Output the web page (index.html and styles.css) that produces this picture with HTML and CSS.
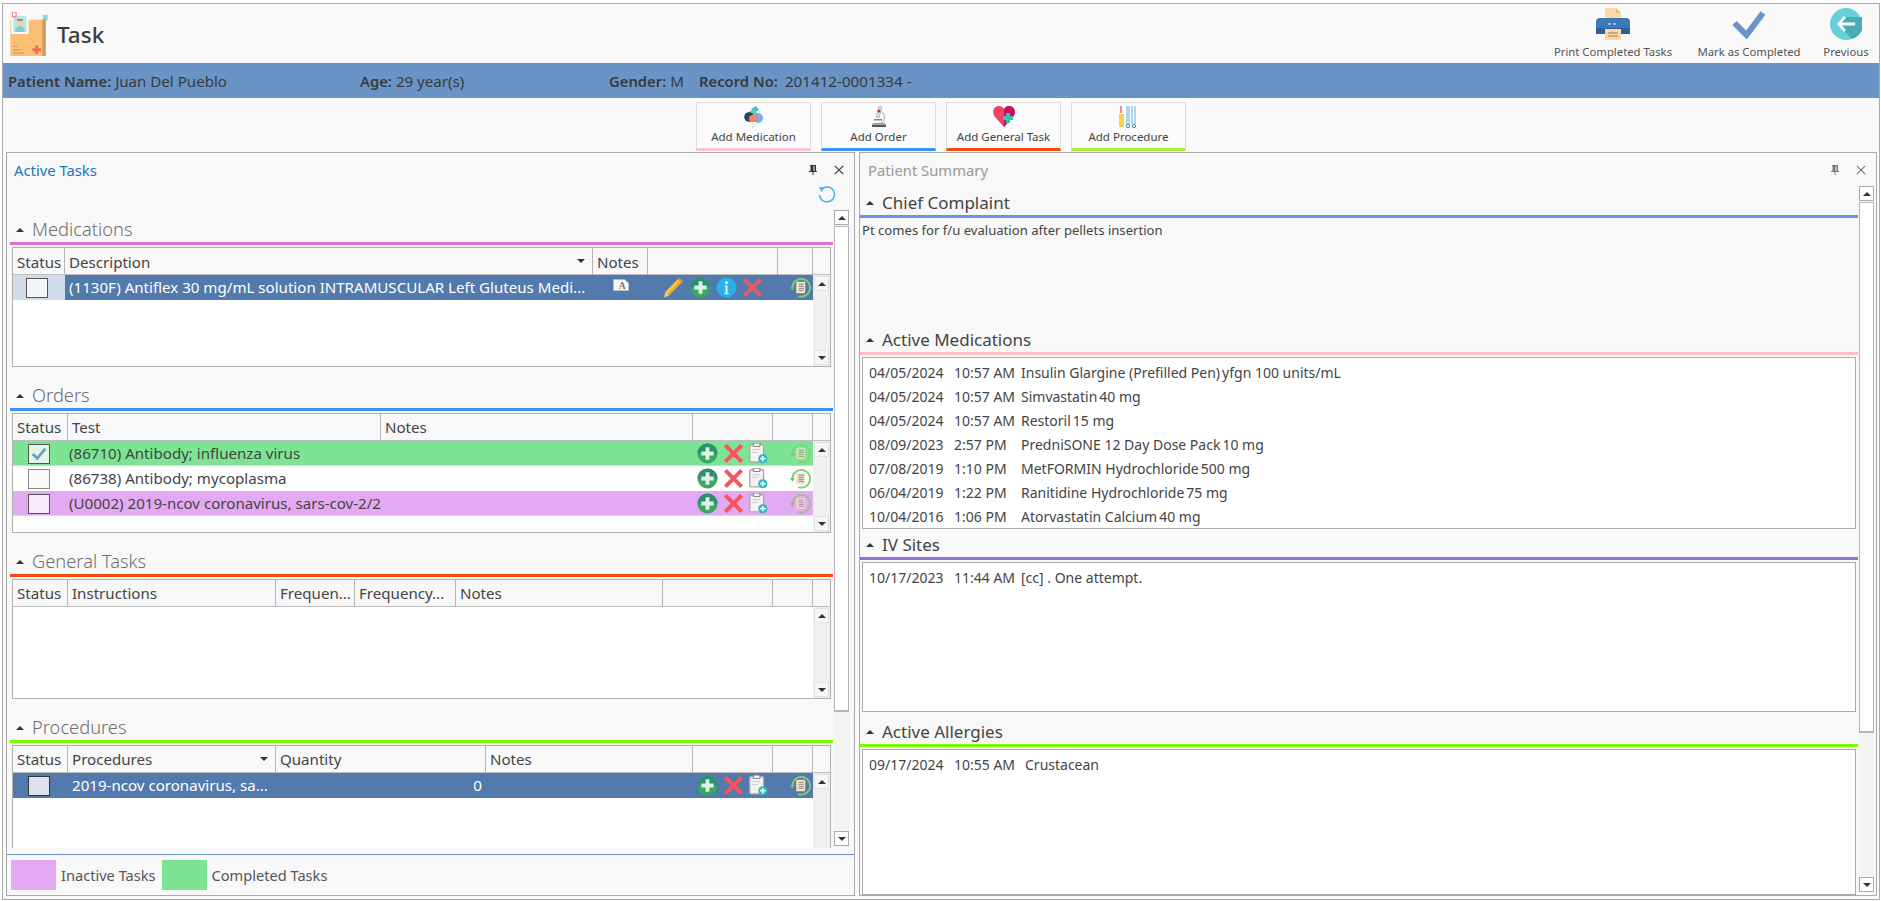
FILE: index.html
```html
<!DOCTYPE html>
<html lang="en">
<head>
<meta charset="utf-8">
<title>Task</title>
<link rel="stylesheet" href="styles.css">
</head>
<body>
<svg class="defs" aria-hidden="true">
  <symbol id="i-plus" viewBox="0 0 22 22"><circle cx="11" cy="11" r="10.5" fill="#3aa85f"/><path d="M.5 11a10.5 10.5 0 0 1 21 0z" fill="#2b8f70"/><path d="M9 4.500h4V9h4.500v4H13v4.500H9V13H4.500V9H9z" fill="#dff3e6"/></symbol>
  <symbol id="i-x" viewBox="0 0 22 22"><path d="M2.500 2.500l17 17M19.500 2.500l-17 17" stroke="#f4565f" stroke-width="4.200" fill="none"/></symbol>
  <symbol id="i-info" viewBox="0 0 22 22"><circle cx="11" cy="11" r="10.500" fill="#2bb0ee"/><path d="M9 9h3v8h1.500v1.200h-5V17H10v-6.800H9z" fill="#e8f7ff"/><circle cx="11" cy="5.800" r="1.700" fill="#e8f7ff"/></symbol>
  <symbol id="i-pencil" viewBox="0 0 22 22"><path d="M16.500 1l4 3.500L6 19.500 2 15.500z" fill="#f2a81d"/><path d="M16.500 1l2 1.800L4 17.500 2 15.500z" fill="#fbc93b"/><path d="M2 15.500l4 4-5.500 2z" fill="#eec39a"/><path d="M16.500 1l4 3.500-1.500 1.500-4-3.500z" fill="#f08a24"/></symbol>
  <symbol id="i-clip" viewBox="0 0 20 22"><rect x=".8" y="1.800" width="14.500" height="18" rx="1" fill="#f3f3f3" stroke="#a9a9a9" stroke-width="1.400"/><path d="M4.500 0h7v3.500h-7z" fill="#fff" stroke="#777"/><path d="M3.500 7h8M3.500 10h6" stroke="#ccc" stroke-width="1.200"/><circle cx="14.500" cy="16.500" r="4.800" fill="#2db5c4"/><path d="M13.600 13.500h1.800v2.100h2.100v1.800h-2.100v2.100h-1.800v-2.100h-2.100v-1.800h2.100z" fill="#e6fafa"/></symbol>
  <symbol id="i-restore" viewBox="0 0 22 22"><path d="M2.500 11A9.300 9.300 0 1 1 8.500 20" fill="none" stroke="#7fcf6f" stroke-width="1.900"/><path d="M0 10.500h5l-2.500 3.800z" fill="#74bd68"/><rect x="6.500" y="5.500" width="9" height="11.500" fill="#f7dcb4"/><rect x="7.500" y="5" width="8.500" height="10.500" fill="#efe4cf"/><path d="M9 7.500h5.500M9 9.700h5.500M9 11.900h5.500M9 14h5.500" stroke="#8b8478" stroke-width="1"/></symbol>
  <symbol id="i-note" viewBox="0 0 16 12"><path d="M.5.500h11l4 3.500v7.500H.5z" fill="#f7f7f7" stroke="#b9b9b9"/><text x="5.500" y="10" font-family="Liberation Serif, serif" font-size="10" font-weight="700" fill="#777">A</text></symbol>
  <symbol id="i-check" viewBox="0 0 20 18"><path d="M3 9l5 5 9-11" fill="none" stroke="#6aa0b8" stroke-width="3"/></symbol>
  <symbol id="i-refresh" viewBox="0 0 18 18"><path d="M4 2.800A7.500 7.500 0 1 1 1.500 9" fill="none" stroke="#3fb6ee" stroke-width="1.500"/><path d="M1 1l5.500.5-3 4.500z" fill="#3fb6ee"/></symbol>
  <symbol id="i-pin" viewBox="0 0 10 10"><path d="M2 0h6v6H6.500v-5H2zM1 6h8v1H5.500v3h-1V7H1zM2.500 1h3v5h-3z" fill="currentColor"/></symbol>
  <symbol id="i-close" viewBox="0 0 10 10"><path d="M.8.800l8.400 8.400M9.200.800L.8 9.200" stroke="currentColor" stroke-width="1.100" fill="none"/></symbol>
  <symbol id="i-logo" viewBox="0 0 40 46"><path d="M0 8h34v38H0z" fill="#fbbf76"/><path d="M34 3h5v6h-5z" fill="#8ed8d4"/><path d="M34 8h3v38h-3z" fill="#b98a52" opacity=".85"/><path d="M33 8h1v38h-1z" fill="#e8a55c"/><rect x="1" y="2" width="18" height="21" fill="#fff"/><rect x="3" y="4" width="14" height="17" fill="#b6e8e8"/><path d="M5 21c0-5 3-6 5-6s5 1 5 6z" fill="#7fcfca"/><circle cx="10" cy="11" r="3" fill="#f6cf9c"/><path d="M7 9h6v-1.500H7z" fill="#8a6a3c"/><rect x="2" y="0" width="4" height="5" fill="#fff" stroke="#f06a5a"/><path d="M23 38h3v-3h3v3h3v3h-3v3h-3v-3h-3z" fill="#ef6b4a"/><path d="M3 36h5M3 39.500h8M3 43h12" stroke="#c69a63" stroke-width="1"/></symbol>
  <symbol id="i-print" viewBox="0 0 34 32"><path d="M9 0h11l5 5v10H9z" fill="#fbd7a9"/><path d="M20 0l5 5h-5z" fill="#eabb85"/><path d="M0 14a4 4 0 0 1 4-4h26a4 4 0 0 1 4 4v12H0z" fill="#3d77b6"/><path d="M0 20h34v6H0z" fill="#2c5f9b"/><path d="M12 16h3M17 16h3" stroke="#bcd4ee" stroke-width="1.500"/><path d="M9 21h16v11H9z" fill="#fbd7a9"/><path d="M12 25h10M12 28h10" stroke="#9a7a54" stroke-width="1"/></symbol>
  <symbol id="i-done" viewBox="0 0 34 30"><path d="M2.500 13l12 12L31 3" fill="none" stroke="#6b93c7" stroke-width="6"/></symbol>
  <symbol id="i-prev" viewBox="0 0 32 32"><circle cx="16" cy="16" r="16" fill="#66d0da"/><path d="M16 9h16A16 16 0 0 1 22 31L8 17z" fill="#4aaab8"/><path d="M14 8l-7 8 7 8 2-2-4-4.500h13v-3H12l4-4.500z" fill="#f4fcfd"/></symbol>
  <symbol id="i-pills" viewBox="0 0 22 22"><path d="M8 3l5-3 3 4-5 3z" fill="#4cc1b8"/><path d="M4 7l7-4 3 5-7 4z" fill="#63c8bd"/><circle cx="6" cy="11" r="4.800" fill="#27435f"/><circle cx="15" cy="12" r="5" fill="#74b4ea"/><rect x="6" y="9" width="9" height="7" rx="3.500" fill="#f08566"/><path d="M10 17v5M13 18v2" stroke="#bbb" stroke-dasharray="1.500 1.500"/></symbol>
  <symbol id="i-scope" viewBox="0 0 20 22"><path d="M3 21h14v-2.500H3z" fill="#555"/><path d="M4 17h12v1H4z" fill="#999"/><path d="M10 0l3 1-3 11-3-1z" fill="#ddd" stroke="#999" stroke-width=".600"/><circle cx="10" cy="5" r="1.500" fill="#c0392b"/><path d="M13 6a6.500 6.500 0 0 1-1 11" fill="none" stroke="#bbb" stroke-width="1.200"/><path d="M5 13h8v1.500H5z" fill="#888"/></symbol>
  <symbol id="i-heart" viewBox="0 0 22 22"><path d="M11 21L2 11C-2 6 1 0 6 0c2.500 0 4 1.500 5 3 1-1.500 2.500-3 5-3 5 0 8 6 4 11z" fill="#f2426a"/><path d="M11 3c1-1.500 2.500-3 5-3 5 0 8 6 4 11l-9 10z" fill="#c6105f"/><path d="M13 7h4v3h3v4h-3v3h-4v-3h-3v-4h3z" fill="#35c4b4"/></symbol>
  <symbol id="i-tools" viewBox="0 0 20 22"><rect x="0" y="8" width="5" height="13" fill="#f6cf55"/><path d="M2 0v7" stroke="#e86a6a" stroke-width="1.500"/><path d="M8 0v18M10 0v18M13 0v18M16 0v18" stroke="#6fb7e8" stroke-width="1.100"/><circle cx="9" cy="20" r="1.700" fill="none" stroke="#3d86c6"/><circle cx="15" cy="20" r="1.700" fill="none" stroke="#3d86c6"/></symbol>
</svg>

<div class="window">
  <header class="top">
    <div class="brand">
      <svg class="logo"><use href="#i-logo"/></svg>
      <h1 class="title">Task</h1>
    </div>
    <nav class="actions">
      <div class="action action-print"><svg class="ai ai-print"><use href="#i-print"/></svg><span>Print Completed Tasks</span></div>
      <div class="action action-mark"><svg class="ai ai-done"><use href="#i-done"/></svg><span>Mark as Completed</span></div>
      <div class="action action-prev"><svg class="ai ai-prev"><use href="#i-prev"/></svg><span>Previous</span></div>
    </nav>
  </header>

  <div class="patient">
    <div class="pf pf-name"><b>Patient Name:</b> Juan Del Pueblo</div>
    <div class="pf pf-age"><b>Age:</b> 29 year(s)</div>
    <div class="pf pf-gender"><b>Gender:</b> M</div>
    <div class="pf"><b>Record No:</b><span class="rec">201412-0001334 -</span></div>
  </div>

  <div class="toolbar">
    <button class="tb tb-pink"><svg class="tbi"><use href="#i-pills"/></svg><span>Add Medication</span></button>
    <button class="tb tb-blue"><svg class="tbi"><use href="#i-scope"/></svg><span>Add Order</span></button>
    <button class="tb tb-red"><svg class="tbi"><use href="#i-heart"/></svg><span>Add General Task</span></button>
    <button class="tb tb-green"><svg class="tbi"><use href="#i-tools"/></svg><span>Add Procedure</span></button>
  </div>

  <main class="panels">
    <section class="panel panel-left">
      <div class="phead">
        <span class="ptitle ptitle-active">Active Tasks</span>
        <div class="ptools"><svg class="pt"><use href="#i-pin"/></svg><svg class="pt"><use href="#i-close"/></svg></div>
      </div>
      <div class="refresh-row"><svg class="refresh"><use href="#i-refresh"/></svg></div>
      <div class="pbody">
        <div class="tasks">
          <div class="sec">
            <div class="heading light"><i class="caret"></i>Medications</div>
            <div class="rule r-meds"></div>
            <div class="grid">
              <div class="ghead h-meds"><div class="c">Status</div><div class="c sort">Description<i class="dn"></i></div><div class="c">Notes</div><div class="c"></div><div class="c"></div><div class="c last"></div></div>
              <div class="gbody">
                <div class="rows">
                  <div class="row t-meds sel">
                    <div class="st"><i class="box"></i></div>
                    <div class="tx">(1130F) Antiflex 30 mg/mL solution INTRAMUSCULAR Left Gluteus Medi...</div>
                    <div class="notec"><svg class="ic-note"><use href="#i-note"/></svg></div>
                    <div class="icons icons-m"><svg class="ic ic-pen"><use href="#i-pencil"/></svg><svg class="ic"><use href="#i-plus"/></svg><svg class="ic"><use href="#i-info"/></svg><svg class="ic"><use href="#i-x"/></svg></div>
                    <div class="rest rest-m"><svg class="ic"><use href="#i-restore"/></svg></div>
                  </div>
                </div>
                <div class="sb"><b class="btn"><i class="up"></i></b><b class="btn"><i class="dn"></i></b></div>
              </div>
            </div>
          </div>

          <div class="sec">
            <div class="heading light"><i class="caret"></i>Orders</div>
            <div class="rule r-orders"></div>
            <div class="grid">
              <div class="ghead h-orders"><div class="c">Status</div><div class="c">Test</div><div class="c">Notes</div><div class="c"></div><div class="c"></div><div class="c last"></div></div>
              <div class="gbody">
                <div class="rows">
                  <div class="row t-orders done">
                    <div class="st"><i class="box"><svg class="tick"><use href="#i-check"/></svg></i></div>
                    <div class="tx tx-o">(86710) Antibody; influenza virus</div><div></div>
                    <div class="icons"><svg class="ic"><use href="#i-plus"/></svg><svg class="ic"><use href="#i-x"/></svg><svg class="ic ic-c"><use href="#i-clip"/></svg></div>
                    <div class="rest faded"><svg class="ic"><use href="#i-restore"/></svg></div>
                  </div>
                  <div class="row t-orders">
                    <div class="st"><i class="box"></i></div>
                    <div class="tx tx-o">(86738) Antibody; mycoplasma</div><div></div>
                    <div class="icons"><svg class="ic"><use href="#i-plus"/></svg><svg class="ic"><use href="#i-x"/></svg><svg class="ic ic-c"><use href="#i-clip"/></svg></div>
                    <div class="rest"><svg class="ic"><use href="#i-restore"/></svg></div>
                  </div>
                  <div class="row t-orders inactive">
                    <div class="st"><i class="box"></i></div>
                    <div class="tx tx-o">(U0002) 2019-ncov coronavirus, sars-cov-2/2019-ncov</div><div></div>
                    <div class="icons"><svg class="ic"><use href="#i-plus"/></svg><svg class="ic"><use href="#i-x"/></svg><svg class="ic ic-c"><use href="#i-clip"/></svg></div>
                    <div class="rest faded"><svg class="ic"><use href="#i-restore"/></svg></div>
                  </div>
                </div>
                <div class="sb"><b class="btn"><i class="up"></i></b><b class="btn"><i class="dn"></i></b></div>
              </div>
            </div>
          </div>

          <div class="sec">
            <div class="heading light"><i class="caret"></i>General Tasks</div>
            <div class="rule r-general"></div>
            <div class="grid">
              <div class="ghead h-general"><div class="c">Status</div><div class="c">Instructions</div><div class="c">Frequen...</div><div class="c">Frequency...</div><div class="c">Notes</div><div class="c"></div><div class="c"></div><div class="c last"></div></div>
              <div class="gbody">
                <div class="rows"></div>
                <div class="sb"><b class="btn"><i class="up"></i></b><b class="btn"><i class="dn"></i></b></div>
              </div>
            </div>
          </div>

          <div class="sec">
            <div class="heading light"><i class="caret"></i>Procedures</div>
            <div class="rule r-proc"></div>
            <div class="grid">
              <div class="ghead h-proc"><div class="c">Status</div><div class="c sort">Procedures<i class="dn"></i></div><div class="c">Quantity</div><div class="c">Notes</div><div class="c"></div><div class="c"></div><div class="c last"></div></div>
              <div class="gbody">
                <div class="rows">
                  <div class="row t-proc sel sel-full">
                    <div class="st"><i class="box"></i></div>
                    <div class="tx tx-p">2019-ncov coronavirus, sa...</div>
                    <div class="qty">0</div><div></div>
                    <div class="icons"><svg class="ic"><use href="#i-plus"/></svg><svg class="ic"><use href="#i-x"/></svg><svg class="ic ic-c"><use href="#i-clip"/></svg></div>
                    <div class="rest"><svg class="ic"><use href="#i-restore"/></svg></div>
                  </div>
                </div>
                <div class="sb"><b class="btn"><i class="up"></i></b><b class="btn"><i class="dn"></i></b></div>
              </div>
            </div>
          </div>
        </div>
        <div class="osb osb-left">
          <b class="obtn"><i class="up"></i></b>
          <div class="otrack"><div class="othumb othumb-left"></div></div>
          <b class="obtn"><i class="dn"></i></b>
        </div>
      </div>
      <footer class="legend">
        <i class="sw sw-in"></i><span class="lg">Inactive Tasks</span>
        <i class="sw sw-co"></i><span class="lg">Completed Tasks</span>
      </footer>
    </section>

    <section class="panel panel-right">
      <div class="phead">
        <span class="ptitle">Patient Summary</span>
        <div class="ptools gray"><svg class="pt"><use href="#i-pin"/></svg><svg class="pt"><use href="#i-close"/></svg></div>
      </div>
      <div class="sumbody">
        <div class="summary">
          <div class="heading h-chief"><i class="caret"></i>Chief Complaint</div>
          <div class="rule r-chief"></div>
          <div class="chief">Pt comes for f/u evaluation after pellets insertion</div>

          <div class="heading h-med"><i class="caret"></i>Active Medications</div>
          <div class="rule r-amed"></div>
          <div class="list list-med">
            <div class="li"><span class="d">04/05/2024</span><span class="t">10:57 AM</span><span>Insulin Glargine (Prefilled Pen)</span><span class="dose">yfgn 100 units/mL</span></div>
            <div class="li"><span class="d">04/05/2024</span><span class="t">10:57 AM</span><span>Simvastatin</span><span class="dose">40 mg</span></div>
            <div class="li"><span class="d">04/05/2024</span><span class="t">10:57 AM</span><span>Restoril</span><span class="dose">15 mg</span></div>
            <div class="li"><span class="d">08/09/2023</span><span class="t">2:57 PM</span><span>PredniSONE 12 Day Dose Pack</span><span class="dose">10 mg</span></div>
            <div class="li"><span class="d">07/08/2019</span><span class="t">1:10 PM</span><span>MetFORMIN Hydrochloride</span><span class="dose">500 mg</span></div>
            <div class="li"><span class="d">06/04/2019</span><span class="t">1:22 PM</span><span>Ranitidine Hydrochloride</span><span class="dose">75 mg</span></div>
            <div class="li"><span class="d">10/04/2016</span><span class="t">1:06 PM</span><span>Atorvastatin Calcium</span><span class="dose">40 mg</span></div>
          </div>

          <div class="heading h-iv"><i class="caret"></i>IV Sites</div>
          <div class="rule r-iv"></div>
          <div class="list list-iv">
            <div class="li"><span class="d">10/17/2023</span><span class="t">11:44 AM</span><span>[cc] . One attempt.</span></div>
          </div>

          <div class="heading h-med"><i class="caret"></i>Active Allergies</div>
          <div class="rule r-all"></div>
          <div class="list list-all">
            <div class="li"><span class="d">09/17/2024</span><span class="t t-all">10:55 AM</span><span>Crustacean</span></div>
          </div>
        </div>
        <div class="osb osb-right">
          <b class="obtn"><i class="up"></i></b>
          <div class="otrack"><div class="othumb othumb-right"></div></div>
          <b class="obtn"><i class="dn"></i></b>
        </div>
      </div>
    </section>
  </main>
</div>
</body>
</html>
```
FILE: styles.css
```css
* { box-sizing: border-box; }
html, body { margin: 0; height: 100%; }
body {
  padding: 3px 1px 1px 2px;
  background: #fff;
  font-family: "Noto Sans", "Open Sans", sans-serif;
  font-size: 15.1px;
  color: #444;
  overflow: hidden;
}
.defs { position: absolute; width: 0; height: 0; }
i { font-style: normal; }

.window {
  height: 897px;
  border: 1px solid #aaa;
  background: #fafafa;
  display: flex;
  flex-direction: column;
}

/* top */
.top { height: 59px; display: flex; justify-content: space-between; flex: none; background: #f9f9f9; }
.brand { display: flex; align-items: flex-start; padding: 8px 0 0 7px; }
.logo { width: 39px; height: 44px; }
.title { margin: 8px 0 0 8px; font-size: 22.5px; line-height: 30px; font-weight: 500; color: #3c3c3c; }
.actions { display: flex; }
.action { display: flex; flex-direction: column; align-items: center; font-size: 11.3px; color: #555; padding-top: 4px; }
.action span { line-height: 16px; margin-top: 4px; white-space: nowrap; }
.action-print { width: 120px; margin-right: 24px; }
.action-mark { width: 104px; margin-right: 22px; }
.action-prev { width: 46px; margin-right: 10px; }
.ai { display: block; }
.ai-print { width: 34px; height: 32px; }
.ai-done { width: 34px; height: 30px; margin-top: 2px; }
.ai-prev { width: 32px; height: 32px; }

/* patient */
.patient { height: 35px; flex: none; background: #6a93c6; display: flex; align-items: center; padding-left: 5px; font-size: 15.1px; color: #3a3a3a; }
.pf b { font-weight: 600; font-size: 14.8px; }
.pf-name { width: 352px; }
.pf-age { width: 249px; }
.pf-gender { width: 90px; }
.rec { margin-left: 7px; font-size: 15.2px; }

/* toolbar */
.toolbar { height: 54px; flex: none; display: flex; justify-content: center; gap: 10px; padding: 4px 0 0 0; }
.tb {
  width: 115px; height: 49px; padding: 3px 0 0;
  background: #fbfbfb; border: 1px solid #dcdcdc; border-bottom-width: 3px;
  display: flex; flex-direction: column; align-items: center;
  font: inherit; font-size: 11.5px; color: #444; line-height: 15px;
}
.tbi { width: 22px; height: 22px; margin-bottom: 1px; flex: none; }
.tb-pink { border-bottom-color: #f7c3d0; }
.tb-blue { border-bottom-color: #3b92f5; }
.tb-red { border-bottom-color: #f44a0c; }
.tb-green { border-bottom-color: #a8ee3a; }

/* panels */
.panels { flex: 1; min-height: 0; display: flex; gap: 4px; padding: 0 2px 3px 3px; }
.panel { border: 1px solid #aaa; background: #f8f8f8; display: flex; flex-direction: column; min-height: 0; }
.panel-left { width: 849px; flex: none; }
.panel-right { flex: 1; min-width: 0; }
.phead { height: 33px; flex: none; display: flex; justify-content: space-between; align-items: flex-end; padding: 0 10px 0 7px; }
.ptitle { font-size: 14.8px; line-height: 20px; color: #9a9a9a; margin-bottom: 6px; }
.panel-right .ptitle { margin-left: 1px; }
.ptitle-active { color: #1a73c8; }
.ptools { display: flex; gap: 16px; color: #333; margin-bottom: 11px; }
.ptools.gray { color: #777; }
.pt { width: 10px; height: 10px; }
.refresh-row { height: 18px; flex: none; display: flex; justify-content: flex-end; padding-right: 18px; }
.refresh { width: 18px; height: 18px; }
.pbody { flex: 1; min-height: 0; display: flex; padding: 0 4px 6px 3px; }
.tasks { width: 823px; flex: none; display: flex; flex-direction: column; gap: 3px; overflow: hidden; }
.sec { flex: none; }

.heading { height: 38px; display: flex; align-items: flex-end; font-size: 17px; line-height: 24px; color: #444; padding-left: 22px; position: relative; white-space: nowrap; }
.heading.light { color: #6f6f6f; font-weight: 300; font-size: 18.3px; padding-bottom: 1px; }
.caret { position: absolute; left: 6px; bottom: 10px; width: 0; height: 0; border: 4px solid transparent; border-top: 0; border-bottom: 4px solid #333; }
.rule { height: 3px; }
.r-meds { background: #e070d8; }
.r-orders { background: #3b92f5; }
.r-general { background: #f44a0c; }
.r-proc { background: #7cfc00; }
.r-chief { background: #6495ed; }
.r-amed { background: #ffc0cb; }
.r-iv { background: #9370db; }
.r-all { background: #7cfc00; }

/* grid */
.grid { margin: 2px 2px 0 2px; height: 120px; border: 1px solid #b0b0b0; background: #fff; display: flex; flex-direction: column; }
.ghead, .row { display: grid; }
.ghead { height: 27px; flex: none; background: #f8f8f8; border-bottom: 1px solid #bdbdbd; }
.h-meds .c { padding-top: 1px; }
.h-meds { grid-template-columns: 52px 528px 55px 130px 35px 17px; }
.h-orders { grid-template-columns: 55px 313px 312px 80px 40px 17px; }
.h-general { grid-template-columns: 55px 208px 79px 101px 207px 110px 40px 17px; }
.h-proc { grid-template-columns: 55px 208px 210px 207px 80px 40px 17px; }
.t-meds { grid-template-columns: 52px 528px 55px 129px 36px; }
.t-orders { grid-template-columns: 55px 313px 311px 80px 41px; }
.t-proc { grid-template-columns: 55px 208px 210px 206px 80px 41px; }
.c { border-right: 1px solid #b5b5b5; padding: 0 0 0 4px; line-height: 26px; white-space: nowrap; overflow: hidden; position: relative; }
.c.last { border-right: 0; }
.sort .dn { position: absolute; right: 7px; top: 11px; }
.gbody { flex: 1; min-height: 0; display: flex; }
.rows { width: 800px; flex: none; }
.row { height: 25px; align-items: center; white-space: nowrap; line-height: 25px; }
.st { height: 25px; display: flex; align-items: center; justify-content: center; padding-right: 4px; }
.box { width: 22px; height: 20px; border: 1.500px solid #8a8a8a; background: #fafafa; display: flex; align-items: center; justify-content: center; }
.tick { width: 18px; height: 16px; }
.tx { padding-left: 4px; overflow: hidden; }
.tx-o { padding-left: 1px; }
.tx-p { padding-left: 4px; }
.notec { display: flex; justify-content: center; align-items: center; }
.ic-note { width: 16px; height: 12px; margin-top: -5px; }
.qty { text-align: right; padding-right: 4px; }
.icons { display: flex; align-items: center; gap: 5px; padding-left: 5px; height: 25px; }
.icons-m { padding-left: 15px; }
.ic { width: 21px; height: 21px; flex: none; }
.ic-pen { width: 22px; }
.ic-c { width: 19px; }
.rest { padding-left: 18px; height: 25px; display: flex; align-items: center; }
.rest-m { padding-left: 13px; }
.faded { opacity: .7; }
.row.sel { background: #527aad; color: #fff; }
.row.sel .st { background: #d0dcea; }
.row.sel .box { background: #f4f5f7; border-color: #555; }
.row.sel-full .st { background: transparent; }
.row.sel-full .box { background: #dbe2ec; border-color: #333; }
.row.done { background: #7de495; border-bottom: 1px solid #a8edb8; }
.row.done .box { background: #e2f5e8; border-color: #555; }
.row.inactive { background: #e4a9f3; border-bottom: 1px solid #f0cdf8; }
.row.inactive .box { background: #f6e9f9; border-color: #555; }

/* scrollbars */
.sb { width: 17px; flex: none; background: #f0f0f0; display: flex; flex-direction: column; justify-content: space-between; padding: 1px; }
.btn { width: 15px; height: 15px; background: #f6f6f6; border: 1px solid #e2e2e2; display: flex; align-items: center; justify-content: center; }
.up, .dn { display: block; width: 0; height: 0; border: 4px solid transparent; }
.up { border-top: 0; border-bottom: 4px solid #333; }
.dn { border-bottom: 0; border-top: 4px solid #333; }
.osb { width: 15px; flex: none; display: flex; flex-direction: column; gap: 1px; padding: 6px 0 2px; margin-left: 1px; }
.obtn { width: 15px; height: 15px; flex: none; background: #fff; border: 1px solid #aaa; display: flex; align-items: center; justify-content: center; }
.otrack { flex: 1; min-height: 0; background: #f4f4f4; }
.othumb { background: #fff; border: 1px solid #b5b5b5; border-width: 1px 1px 2px; }
.othumb-left { height: 486px; }
.othumb-right { height: 531px; }

/* legend */
.legend { height: 41px; flex: none; border-top: 1px solid #6a93c6; display: flex; align-items: center; padding: 0 0 0 4px; font-size: 14.6px; color: #555; }
.sw { width: 45px; height: 30px; flex: none; }
.sw-in { background: #e4a9f3; }
.sw-co { background: #7de495; }
.lg { margin: 0 6px 0 5px; }

/* summary */
.sumbody { flex: 1; min-height: 0; display: flex; }
.summary { width: 998px; flex: none; display: flex; flex-direction: column; font-size: 14px; }
.h-chief { height: 29px; flex: none; }
.h-med { height: 32px; flex: none; }
.h-iv { height: 28px; flex: none; }
.chief { height: 102px; flex: none; padding: 3px 0 0 2px; line-height: 19px; font-size: 13.1px; }
.list { margin: 2px 2px 0 2px; border: 1px solid #aaa; background: #fff; padding: 2px 0 0 6px; flex: none; }
.list-med { height: 172px; }
.list-iv { height: 150px; }
.list-all { flex: 1; min-height: 0; }
.li { height: 24px; display: flex; align-items: center; white-space: nowrap; }
.d { width: 85px; flex: none; }
.t { width: 67px; flex: none; }
.t-all { width: 71px; }
.dose { margin-left: 2px; }
.osb-right { padding: 0 0 3px; margin-left: 1px; }
```
